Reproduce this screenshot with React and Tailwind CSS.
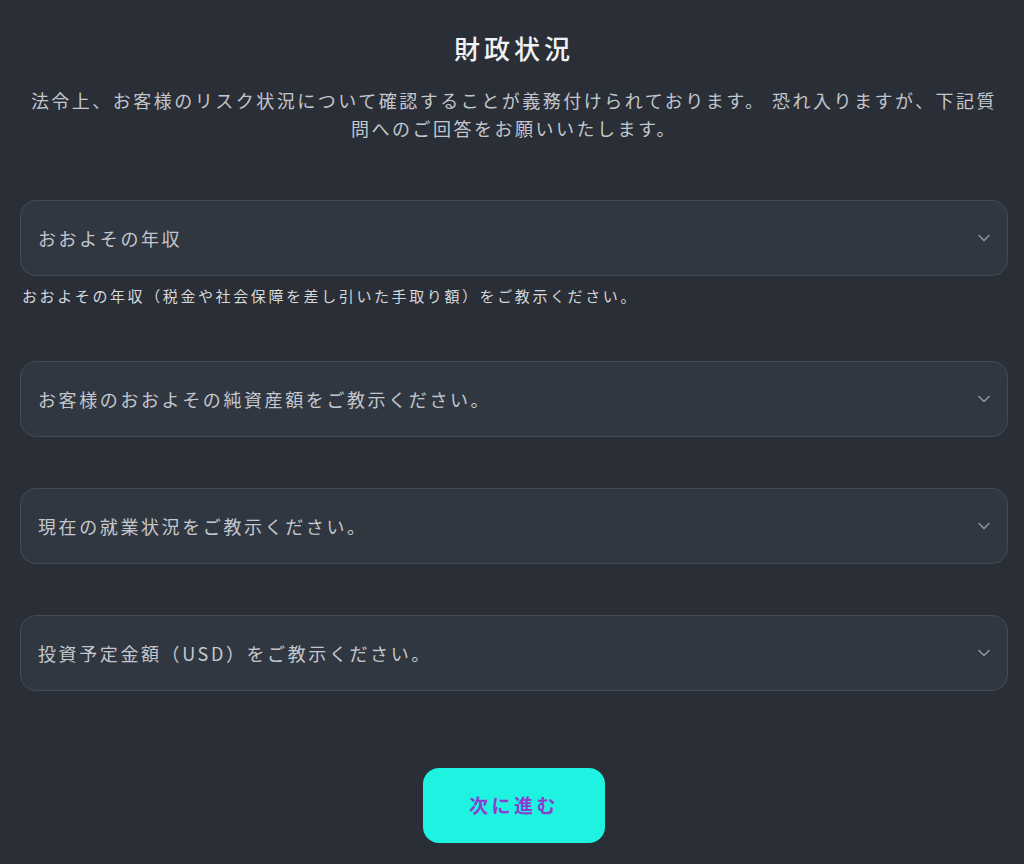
import React from "react";

const fields = [
  { label: "おおよその年収", help: "おおよその年収（税金や社会保障を差し引いた手取り額）をご教示ください。" },
  { label: "お客様のおおよその純資産額をご教示ください。" },
  { label: "現在の就業状況をご教示ください。" },
  { label: "投資予定金額（USD）をご教示ください。" },
];

const Chevron = () => (
  <svg width="20" height="20" viewBox="0 0 24 24" fill="none" stroke="#8b929c" strokeWidth="2" strokeLinecap="round" strokeLinejoin="round">
    <path d="M6 9l6 6 6-6" />
  </svg>
);

export default function App() {
  return (
    <div
      className="min-h-[864px] w-full bg-[#2a2e36] flex flex-col items-center pt-[28px] pl-[20px] pr-[16px]"
      style={{ fontFamily: '"Noto Sans CJK JP", "Noto Sans", sans-serif' }}
    >
      <h1 className="text-[26px] leading-[40px] font-medium tracking-[4px] text-[#f1f2f4]">財政状況</h1>
      <p className="mt-[18px] px-[4px] text-[18px] leading-[28px] tracking-[2.5px] text-[#c3c7cd] text-center">
        法令上、お客様のリスク状況について確認することが義務付けられております。 恐れ入りますが、下記質問へのご回答をお願いいたします。
      </p>
      <div className="w-full mt-[58px] flex flex-col">
        {fields.map((f, i) => (
          <div key={i} className={i === 0 ? "mb-[54px]" : "mb-[51px]"}>
            <div className="h-[76px] w-full rounded-[16px] border border-[#444b55] bg-[#313740] flex items-center justify-between pl-[17px] pr-[13px]">
              <span className="text-[18px] tracking-[2.6px] text-[#c3c7cd]">{f.label}</span>
              <Chevron />
            </div>
            {f.help && (
              <div className="mt-[9px] pl-[2px] text-[15px] leading-[22px] tracking-[2.6px] text-[#d5d8dc]">{f.help}</div>
            )}
          </div>
        ))}
      </div>
      <button className="mt-[26px] w-[182px] h-[75px] rounded-[16px] bg-[#1ef2e0] text-[#8a3fd1] text-[19px] tracking-[3.5px] font-bold">
        次に進む
      </button>
    </div>
  );
}
